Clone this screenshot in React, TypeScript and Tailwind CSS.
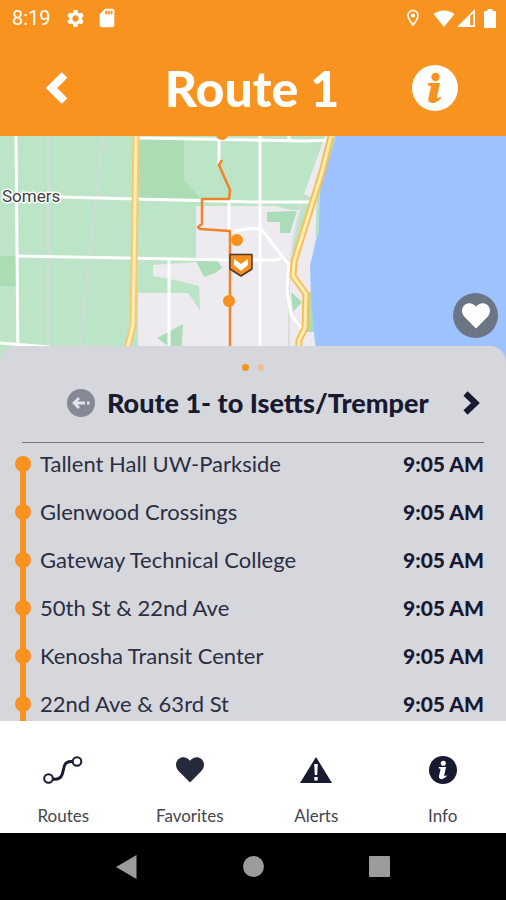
import React from "react";
import { MdOutlineLocationOn, MdSdCard, MdSettings } from "react-icons/md";

const stops = [
  { name: "Tallent Hall UW-Parkside", time: "9:05 AM" },
  { name: "Glenwood Crossings", time: "9:05 AM" },
  { name: "Gateway Technical College", time: "9:05 AM" },
  { name: "50th St & 22nd Ave", time: "9:05 AM" },
  { name: "Kenosha Transit Center", time: "9:05 AM" },
  { name: "22nd Ave & 63rd St", time: "9:05 AM" },
];

function InfoIcon({ className, mark }: { className: string; mark: string }) {
  return (
    <svg viewBox="0 0 46 46" className={className} aria-hidden="true">
      <circle cx="23" cy="23" r="23" fill="currentColor" />
      <circle cx="23.5" cy="12" r="4.2" fill={mark} />
      <path
        d="M16 18H28L25 31.800C24.700 33.500 26 33.600 28.300 31.800L29.200 33C26.500 36.200 23.500 38 20.500 38C17 38 15.800 35.800 16.500 32.600L18.900 22C19.100 20.900 18.600 20.600 16 20.400Z"
        fill={mark}
      />
    </svg>
  );
}

function HeartIcon({ className }: { className: string }) {
  return (
    <svg viewBox="0 0 28 26" className={className} fill="currentColor" aria-hidden="true">
      <path d="M14 25.5L2.6 14C-.9 10.300-.8 5 2.600 2C6-.9 11-.3 14 3.800C17-.3 22-.9 25.400 2C28.800 5 28.900 10.300 25.400 14Z" />
    </svg>
  );
}

function StatusBar() {
  return (
    <div className="flex h-9 items-center justify-between pr-[10px] pl-3">
      <div className="flex items-center">
        <span className="font-[Roboto,sans-serif] text-[20px] leading-6">8:19</span>
        <MdSettings className="ml-[14px] size-[21px]" />
        <MdSdCard className="ml-[10px] size-[22px]" />
      </div>
      <div className="flex items-center">
        <MdOutlineLocationOn className="size-5" />
        <svg viewBox="0 0 22 17" className="ml-[10px] h-[17px] w-[22px]" fill="currentColor">
          <path d="M.5 4C6.500-.8 15.500-.8 21.500 4L11 17Z" />
        </svg>
        <svg viewBox="0 0 18 18" className="ml-[2px] size-[18px]">
          <path d="M0 18L18 0V18Z" fill="currentColor" />
          <path d="M13.200 7L16.300 4V16.300H13.200Z" fill="#f7931e" />
        </svg>
        <svg viewBox="0 0 12 19" className="ml-[9px] h-[19px] w-3" fill="currentColor">
          <path d="M3.500 0H8.500V2H11Q12 2 12 3V18Q12 19 11 19H1Q0 19 0 18V3Q0 2 1 2H3.500Z" />
        </svg>
      </div>
    </div>
  );
}

function RouteMap() {
  return (
    <svg
      viewBox="0 136 506 226"
      preserveAspectRatio="xMidYMin slice"
      className="block h-full w-full"
      role="img"
      aria-label="Map of Route 1"
    >
      <rect y="136" width="506" height="226" fill="#bce4c7" />
      <path d="M139 138H184V180L200 198H139ZM0 256H16V286H0Z" fill="#abdcb4" />
      <path
        d="M138 362V293H188L200 310L199 286L175 280L153 276V265L196 262V206H275L292 210L303 197L325 136H338V362Z"
        fill="#edebef"
      />
      <path
        d="M196 261L216 258L222 268L215 273L204 277ZM157 338L183 324L181 362H168V346ZM267 212L297 211L290 233H280V222H267ZM291 292L302 302L293 312ZM306 292H312L315 332H306Z"
        fill="#abdcb8"
      />
      <path d="M303 194L316 199L296 264L290 263L297 218L300 210H290L280 204H300Z" fill="#bce4c7" />
      <path
        d="M335 136H506V362H317L314 333L311 295L310 266L317 235L320 182Z"
        fill="#9cc2ff"
      />
      <path d="M334 138L319 185L317 236" fill="none" stroke="#b5e3c8" strokeWidth="3" />
      <g fill="none" stroke="#d3dad9" strokeWidth="2">
        <path d="M48 136V362" strokeWidth="3" />
        <path d="M103 136L94 215L80 346" />
        <path d="M289 362V280L293 240L302 202" stroke="#dddddf" />
      </g>
      <g fill="none" stroke="#fff" strokeWidth="3" strokeLinejoin="round">
        <path d="M16 136L18 362" />
        <path d="M60 197L253 202H312" />
        <path d="M17 256L230 260H277L281 258" />
        <path d="M139 138L253 140L305 141L331 140" />
        <path d="M0 343L50 347" />
        <path d="M260 136V362" />
        <path d="M219 138V164M229 200V232M169 260V362M289 136V140" />
        <path d="M229 232L253 228L262 230L289 265L296 261" />
        <path d="M289 265L287 290L291 315L303 330" />
      </g>
      <g fill="none" strokeLinejoin="round">
        <path d="M136 136L134 270L133 325L124 362" stroke="#f7c970" strokeWidth="7" />
        <path d="M136 136L134 270L133 325L124 362" stroke="#ffedb3" strokeWidth="3" />
        <path
          d="M331 136L322 172L294 262L293 276L306 294L305 328L299 340L298 362"
          stroke="#f6bf59"
          strokeWidth="7"
        />
        <path
          d="M331 136L322 172L294 262L293 276L306 294L305 328L299 340L298 362"
          stroke="#ffedb3"
          strokeWidth="3"
        />
        <path
          d="M222 160L219 165L230 190L229 199L202 199V224L198 227L200 229L230 231V362"
          stroke="#f08424"
          strokeWidth="2.500"
        />
      </g>
      <g fill="#f7901e">
        <circle cx="222" cy="134" r="6" />
        <circle cx="237" cy="240" r="6" />
        <circle cx="229" cy="301" r="6" />
      </g>
      <path
        d="M230 254.500H252V269L241 276L230 269Z"
        fill="#f7901e"
        stroke="#4a3828"
        strokeWidth="1.500"
        strokeLinejoin="round"
      />
      <path d="M234 259L241 264L248 259V265L241 271L234 265Z" fill="#fff" />
      <text
        x="2"
        y="202"
        fontFamily="Roboto, sans-serif"
        fontSize="17"
        fill="#3c4043"
        stroke="#fff"
        strokeWidth="3"
        strokeLinejoin="round"
        paintOrder="stroke"
      >
        Somers
      </text>
    </svg>
  );
}

function StopRow({ name, time }: { name: string; time: string }) {
  return (
    <li className="relative flex h-12 items-start pr-[22px] pl-[15px] leading-[42px]">
      <span className="absolute top-[21px] left-5 h-12 w-[6px] bg-[#f7931e]" />
      <span className="mt-[13px] size-4 shrink-0 rounded-full bg-[#f7931e]" />
      <span className="ml-[9px] flex-1 text-[22px] text-[#2b2e42]">{name}</span>
      <time className="text-[21px] font-black">{time}</time>
    </li>
  );
}

function Tab({ label, children }: { label: string; children: React.ReactNode }) {
  return (
    <button type="button" className="flex flex-col items-center pt-[31px]">
      <span className="flex h-9 items-center">{children}</span>
      <span className="mt-4 text-[17px] leading-6 text-[#45464d]">{label}</span>
    </button>
  );
}

export default function App() {
  return (
    <div className="flex h-screen flex-col overflow-hidden bg-white font-[Lato,sans-serif] text-[#171a30]">
      <header className="shrink-0 bg-[#f7931e] text-white">
        <StatusBar />
        <div className="flex h-[100px] items-center justify-between pt-1 pr-12 pl-[46px]">
          <button type="button" aria-label="Back">
            <svg viewBox="0 0 22 32" className="h-8 w-[22px]" fill="none">
              <path d="M18.500 3L5.500 16L18.500 29" stroke="currentColor" strokeWidth="8" />
            </svg>
          </button>
          <h1 className="pl-6 text-[50px] leading-[56px] font-black">Route 1</h1>
          <button type="button" aria-label="Route information">
            <InfoIcon className="size-[46px]" mark="#f7931e" />
          </button>
        </div>
      </header>

      <section className="relative h-[226px] shrink-0">
        <RouteMap />
        <button
          type="button"
          aria-label="Add to favorites"
          className="absolute right-2 bottom-6 flex size-[45px] items-center justify-center rounded-full bg-[#6c7584] pt-px text-white"
        >
          <HeartIcon className="h-[26px] w-7" />
        </button>
      </section>

      <main className="relative -mt-4 flex min-h-0 flex-1 flex-col overflow-hidden rounded-t-2xl bg-[#d5d7dd]">
        <div className="flex shrink-0 justify-center gap-2 pt-[18px]">
          <span className="size-[7px] rounded-full bg-[#f7931e]" />
          <span className="size-[7px] rounded-full bg-[#ebc09a]" />
        </div>
        <div className="mx-[22px] flex h-[72px] shrink-0 items-center justify-between border-b border-[#74767c] pr-1 pb-2 pl-[45px]">
          <div className="flex items-center gap-3">
            <svg viewBox="0 0 28 28" className="size-7" aria-hidden="true">
              <circle cx="14" cy="14" r="14" fill="#858995" />
              <path
                d="M12 9L7 14L12 19M7 14H18M20 14H22.500"
                fill="none"
                stroke="#e4e5ea"
                strokeWidth="2.800"
              />
            </svg>
            <h2 className="text-[27px] leading-8 font-black whitespace-nowrap">
              Route 1- to Isetts/Tremper
            </h2>
          </div>
          <button type="button" aria-label="Next direction">
            <svg viewBox="0 0 18 24" className="h-6 w-[18px]" fill="none">
              <path d="M3.500 2.500L13.500 12L3.500 21.500" stroke="currentColor" strokeWidth="6" />
            </svg>
          </button>
        </div>
        <ul className="min-h-0 flex-1 overflow-hidden">
          {stops.map((stop) => (
            <StopRow key={stop.name} {...stop} />
          ))}
        </ul>
      </main>

      <nav className="grid h-28 shrink-0 grid-cols-4 items-start bg-white">
        <Tab label="Routes">
          <svg viewBox="0 0 40 28" className="h-7 w-10" fill="none" stroke="currentColor">
            <path d="M10 23C26 25 15 4 29 5.500" strokeWidth="3" />
            <circle cx="5.500" cy="22.500" r="4.300" strokeWidth="2" fill="#fff" />
            <circle cx="34" cy="5.500" r="4.300" strokeWidth="2" fill="#fff" />
          </svg>
        </Tab>
        <Tab label="Favorites">
          <HeartIcon className="h-[26px] w-7 text-[#252a3c]" />
        </Tab>
        <Tab label="Alerts">
          <svg viewBox="0 0 32 26" className="h-[26px] w-8">
            <path d="M16 0L32 26H0Z" fill="currentColor" />
            <path d="M14.200 7H17.800L17.200 18H14.800ZM14.300 20H17.700V23.500H14.300Z" fill="#fff" />
          </svg>
        </Tab>
        <Tab label="Info">
          <InfoIcon className="size-7" mark="#fff" />
        </Tab>
      </nav>

      <footer className="h-[67px] shrink-0 bg-black text-[#9b9b9b]">
        <div className="mx-auto grid h-full w-3/4 grid-cols-3 place-items-center">
          <button type="button" aria-label="System back">
            <svg viewBox="0 0 21 24" className="h-6 w-[21px]" fill="currentColor">
              <path d="M0 12L20.500 0V24Z" />
            </svg>
          </button>
          <button type="button" aria-label="Home" className="size-[21px] rounded-full bg-current" />
          <button type="button" aria-label="Recent apps" className="size-[21px] rounded-[1px] bg-current" />
        </div>
      </footer>
    </div>
  );
}
